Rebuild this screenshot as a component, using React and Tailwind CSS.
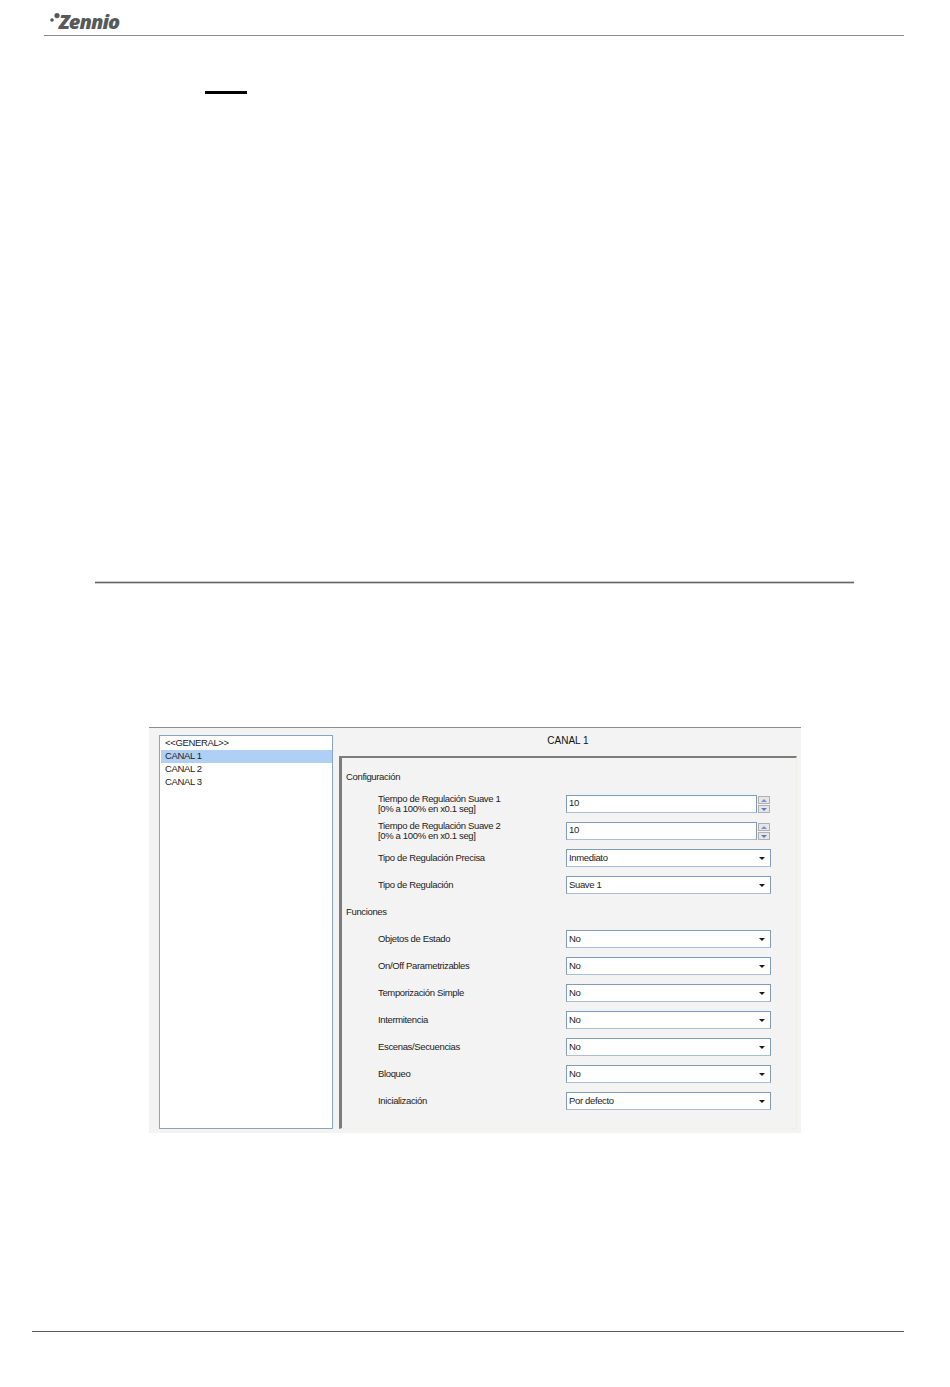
const font = "font-['Liberation_Sans',Arial,sans-serif]";

const configRows = [
  { label: ['Tiempo de Regulación Suave 1', '[0% a 100% en x0.1 seg]'], value: '10', spin: true },
  { label: ['Tiempo de Regulación Suave 2', '[0% a 100% en x0.1 seg]'], value: '10', spin: true },
  { label: ['Tipo de Regulación Precisa'], value: 'Inmediato' },
  { label: ['Tipo de Regulación'], value: 'Suave 1' },
];

const funcRows = [
  { label: ['Objetos de Estado'], value: 'No' },
  { label: ['On/Off Parametrizables'], value: 'No' },
  { label: ['Temporización Simple'], value: 'No' },
  { label: ['Intermitencia'], value: 'No' },
  { label: ['Escenas/Secuencias'], value: 'No' },
  { label: ['Bloqueo'], value: 'No' },
  { label: ['Inicialización'], value: 'Por defecto' },
];

function Logo() {
  return (
    <div className="flex items-start pl-[6px] pt-[10px]">
      <svg width="10" height="12" viewBox="0 0 10 12" className="mt-[3px] mr-[-1px]">
        <circle cx="7" cy="2.6" r="2.6" fill="#58595b" />
        <circle cx="2" cy="7" r="1.8" fill="#58595b" />
      </svg>
      <span className="font-['Open_Sans',sans-serif] text-[20px] leading-[24px] font-extrabold italic tracking-[-0.95px] text-[#58595b]">
        Zennio
      </span>
    </div>
  );
}

function Spinner() {
  return (
    <div className="flex flex-col gap-px ml-px pt-px">
      <div className="w-[12px] h-[8px] border border-[#b0b0b0] bg-[#e6e6e6] flex items-center justify-center">
        <svg width="6" height="3" viewBox="0 0 6 3"><path d="M3 0 L6 3 H0 Z" fill="#7f8fd0" /></svg>
      </div>
      <div className="w-[12px] h-[8px] border border-[#b0b0b0] bg-[#e6e6e6] flex items-center justify-center">
        <svg width="6" height="3" viewBox="0 0 6 3"><path d="M0 0 H6 L3 3 Z" fill="#5f78c8" /></svg>
      </div>
    </div>
  );
}

function Field({ value, spin }) {
  return (
    <div className="flex items-start">
      <div className={`h-[18px] ${spin ? 'w-[191px] pb-[2px]' : 'w-[205px]'} flex items-center justify-between pl-[2px] pr-[5px] bg-white border border-[#7f9db9] border-b-[#a9bfd3] text-[9.5px] tracking-[-0.35px] text-[#222]`}>
        <span>{value}</span>
        {!spin && (
          <svg width="6" height="3" viewBox="0 0 6 3"><path d="M0 0 H6 L3 3 Z" fill="#1a1a1a" /></svg>
        )}
      </div>
      {spin && <Spinner />}
    </div>
  );
}

function Row({ label, value, spin }) {
  return (
    <div className="h-[18px] flex items-center">
      <div className="w-[224px] pl-[36px] text-[9.5px] leading-[10px] tracking-[-0.35px] text-[#222]">
        {label.map(l => <div key={l} className="whitespace-nowrap">{l}</div>)}
      </div>
      <Field value={value} spin={spin} />
    </div>
  );
}

function SectionLabel({ children }) {
  return <div className="h-[18px] flex items-center pl-[4px] text-[9.5px] tracking-[-0.35px] text-[#222]">{children}</div>;
}

function ListItem({ children, active }) {
  return (
    <div className={`h-[13px] pl-[4px] text-[9.5px] leading-[11px] tracking-[-0.35px] text-[#222] ${active ? 'bg-[#b0cff5]' : ''}`}>
      {children}
    </div>
  );
}

function Dialog() {
  return (
    <div className={`ml-[149px] w-[652px] h-[406px] flex bg-[#f3f3f3] border-t border-[#8e8e8e] pl-[10px] pt-[7px] ${font}`}>
      <div className="w-[174px] h-[394px] bg-white border border-[#8aa4bd] pl-px pt-px">
        <ListItem>{'<<GENERAL>>'}</ListItem>
        <ListItem active>CANAL 1</ListItem>
        <ListItem>CANAL 2</ListItem>
        <ListItem>CANAL 3</ListItem>
      </div>
      <div className="ml-[6px] w-[458px] flex flex-col">
        <div className="h-[21px] text-center text-[10px] leading-[10px] pt-[1px] text-[#111]">CANAL 1</div>
        <div className="h-[373px] border-t-2 border-l-[3px] border-r border-b border-t-[#7c7c7c] border-l-[#7c7c7c] border-r-[#efefe9] border-b-[#efefe9] pt-[10px] flex flex-col gap-[9px]">
          <SectionLabel>Configuración</SectionLabel>
          {configRows.map(r => <Row key={r.label[0]} {...r} />)}
          <SectionLabel>Funciones</SectionLabel>
          {funcRows.map(r => <Row key={r.label[0]} {...r} />)}
        </div>
      </div>
    </div>
  );
}

export default function App() {
  return (
    <div className="w-[950px] h-[1387px] bg-white overflow-hidden">
      <div className="ml-[44px] mr-[46px] h-[36px] border-b border-[#8a8a8a]">
        <Logo />
      </div>
      <div className="ml-[205px] mt-[55px] w-[42px] h-[3px] bg-black" />
      <div className="ml-[95px] mt-[487px] w-[759px] h-[3px] border-y border-[#cccccc] bg-[#666666]" />
      <div className="mt-[143px]">
        <Dialog />
      </div>
      <div className="ml-[32px] mt-[198px] w-[872px] h-px bg-[#5a5a5a]" />
    </div>
  );
}
